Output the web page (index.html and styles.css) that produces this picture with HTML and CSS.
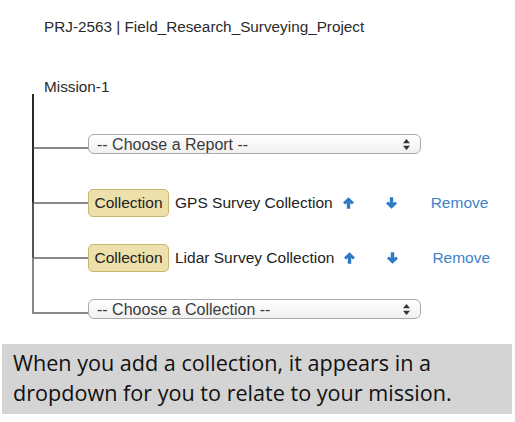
FILE: index.html
```html
<!DOCTYPE html>
<html>
<head>
<meta charset="utf-8">
<link rel="stylesheet" href="styles.css">
</head>
<body>
<div class="page">
  <div class="title">PRJ-2563 | Field_Research_Surveying_Project</div>
  <div class="mission">Mission-1</div>
  <div class="tree">
    <div class="stem"></div>
    <div class="row">
      <div class="conn c1"><div class="top"></div><div class="bot"></div></div>
      <div class="select">
        <span>-- Choose a Report --</span>
        <svg class="updown" width="7" height="11" viewBox="0 0 7 11"><path d="M3.5 0 L7 4.2 H0 Z M3.5 11 L7 6.8 H0 Z" fill="#333"/></svg>
      </div>
    </div>
    <div class="row">
      <div class="conn c2"><div class="top"></div><div class="bot"></div></div>
      <div class="badge">Collection</div>
      <div class="name">GPS Survey Collection</div>
      <svg class="arrow up" width="11" height="12" viewBox="0 0 11 12"><path d="M5.5 0.3 L11 5.6 L8.9 7.6 L7.2 5.9 V11.7 H3.8 V5.9 L2.1 7.6 L0 5.6 Z" fill="#2f7ac4"/></svg>
      <svg class="arrow down" width="11" height="12" viewBox="0 0 11 12"><path d="M5.5 11.7 L11 6.4 L8.9 4.4 L7.2 6.1 V0.3 H3.8 V6.1 L2.1 4.4 L0 6.4 Z" fill="#2f7ac4"/></svg>
      <div class="remove">Remove</div>
    </div>
    <div class="row">
      <div class="conn c3"><div class="top"></div><div class="bot"></div></div>
      <div class="badge">Collection</div>
      <div class="name">Lidar Survey Collection</div>
      <svg class="arrow up" width="11" height="12" viewBox="0 0 11 12"><path d="M5.5 0.3 L11 5.6 L8.9 7.6 L7.2 5.9 V11.7 H3.8 V5.9 L2.1 7.6 L0 5.6 Z" fill="#2f7ac4"/></svg>
      <svg class="arrow down" width="11" height="12" viewBox="0 0 11 12"><path d="M5.5 11.7 L11 6.4 L8.9 4.4 L7.2 6.1 V0.3 H3.8 V6.1 L2.1 4.4 L0 6.4 Z" fill="#2f7ac4"/></svg>
      <div class="remove">Remove</div>
    </div>
    <div class="row">
      <div class="conn c4 last"><div class="top"></div><div class="bot"></div></div>
      <div class="select">
        <span>-- Choose a Collection --</span>
        <svg class="updown" width="7" height="11" viewBox="0 0 7 11"><path d="M3.5 0 L7 4.2 H0 Z M3.5 11 L7 6.8 H0 Z" fill="#333"/></svg>
      </div>
    </div>
  </div>
  <div class="note">When you add a collection, it appears in a dropdown for you to relate to your mission.</div>
</div>
</body>
</html>
```

FILE: styles.css
```css
html, body {
  margin: 0;
  padding: 0;
  background: #fff;
}
.page {
  width: 515px;
  height: 422px;
  display: flex;
  flex-direction: column;
  font-family: "Liberation Sans", Arial, sans-serif;
  color: #222;
}
.title {
  font-size: 15.3px;
  line-height: 18px;
  margin: 18px 0 0 44px;
  color: #2a2a2a;
}
.mission {
  font-size: 15.3px;
  line-height: 15px;
  margin: 43px 0 0 44px;
  color: #2a2a2a;
}
.tree {
  margin-left: 32px;
  display: flex;
  flex-direction: column;
}
.stem {
  height: 26px;
  border-left: 2px solid #2a2a2a;
}
.row {
  height: 55px;
  display: flex;
  align-items: center;
}
.conn {
  width: 56px;
  align-self: stretch;
  display: grid;
  grid-template-rows: 1fr 1fr;
}
.conn .top {
  border-bottom: 2px solid #8a8a8a;
  margin-bottom: -1px;
}
.c1 .top, .c1 .bot { border-left: 2px solid #2a2a2a; }
.c2 .top { border-left: 2px solid #2a2a2a; }
.c2 .bot { border-left: 2px solid #555; }
.c3 .top { border-left: 2px solid #555; }
.c3 .bot { border-left: 2px solid #888; }
.c4 .top { border-left: 2px solid #888; }
.last .bot { border-left: 0; }

.select {
  width: 333px;
  height: 20px;
  margin-bottom: 7px;
  box-sizing: border-box;
  border: 1px solid #a9a9a9;
  border-radius: 6px;
  background: linear-gradient(#ffffff, #f1f1f1);
  display: flex;
  align-items: center;
  justify-content: space-between;
  padding: 0 10px 0 8px;
  font-size: 16px;
  line-height: 17px;
  color: #3a3a3a;
}
.badge {
  width: 81px;
  height: 28px;
  box-sizing: border-box;
  background: #ede0aa;
  border: 1px solid #c9b56c;
  border-radius: 5px;
  display: flex;
  align-items: center;
  justify-content: center;
  font-size: 15.5px;
  color: #222;
}
.name {
  margin-left: 6px;
  font-size: 15.5px;
  color: #222;
}
.arrow.up { margin-left: 10px; }
.arrow.down { margin-left: 32px; }
.remove {
  margin-left: 34px;
  font-size: 15.5px;
  color: #3d82c9;
}
.note {
  margin: 4px 0 0 2px;
  width: 510px;
  height: 70px;
  box-sizing: border-box;
  background: #d4d4d4;
  padding: 4px 11px 0;
  font-family: "Open Sans", sans-serif;
  font-size: 21.6px;
  line-height: 30px;
  color: #111;
}
```
